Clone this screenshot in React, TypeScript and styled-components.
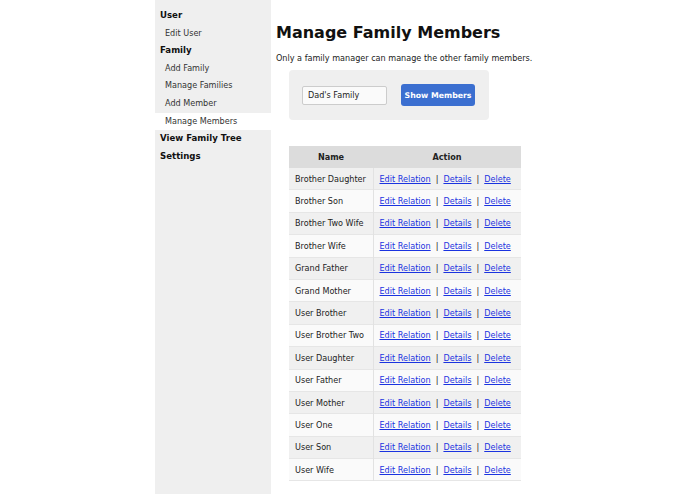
import styled, { createGlobalStyle } from 'styled-components';

const Global = createGlobalStyle`
  html, body { margin: 0; background: #fff; }
  body { font-family: "DejaVu Sans", Verdana, sans-serif; font-size: 8.1px; color: #222; }
`;

const Page = styled.div`
  display: flex;
  min-height: 494px;
  padding-left: 155px;
`;

const Sidebar = styled.nav`
  width: 116px;
  background: #efefef;
  padding-top: 7px;
  display: flex;
  flex-direction: column;
`;

const NavItem = styled.div<{ $head?: boolean; $active?: boolean }>`
  height: 17.6px;
  line-height: 17.6px;
  padding-left: ${(p) => (p.$head ? 5 : 10)}px;
  font-weight: ${(p) => (p.$head ? 700 : 400)};
  font-size: ${(p) => (p.$head ? 8.6 : 8.1)}px;
  background: ${(p) => (p.$active ? '#fff' : 'transparent')};
  color: ${(p) => (p.$head ? '#111' : '#333')};
`;

const Main = styled.main`
  padding-left: 5px;
  flex: 0 0 auto;
`;

const Title = styled.h1`
  margin: 22px 0 0;
  font-size: 16px;
  line-height: 22px;
  font-weight: 700;
  color: #111;
`;

const Intro = styled.p`
  margin: 8px 0 0;
  line-height: 12px;
`;

const FormBox = styled.div`
  margin: 6px 0 0 13px;
  width: 200px;
  height: 50px;
  background: #efefef;
  border-radius: 4px;
  display: flex;
  align-items: center;
  padding-left: 13px;
  box-sizing: border-box;
  gap: 14px;
`;

const Input = styled.div`
  width: 85px;
  height: 19px;
  box-sizing: border-box;
  border: 1px solid #ccc;
  border-radius: 2px;
  background: #fafafa;
  line-height: 17px;
  padding-left: 5px;
`;

const Button = styled.button`
  width: 74px;
  height: 22px;
  border: none;
  border-radius: 3px;
  background: #3b6fd0;
  color: #fff;
  font-family: inherit;
  font-size: 7.8px;
  font-weight: 700;
  padding: 0;
`;

const Table = styled.table`
  margin: 26px 0 0 13px;
  border-collapse: collapse;
  table-layout: fixed;
  width: 232px;
  th { background: #dcdcdc; height: 22px; font-weight: 700; padding: 0; }
  th:first-child { width: 84px; }
  td { height: 21.4px; padding: 0 6px; white-space: nowrap; }
  td:first-child { border-right: 1px solid #e2e2e2; }
  tr:nth-child(odd) td { background: #f0f0f0; }
  tr:nth-child(even) td { background: #fafafa; }
  tbody tr { border-bottom: 1px solid #e6e6e6; }
`;

const Link = styled.a`
  color: #1a33e0;
  text-decoration: underline;
`;

const Sep = styled.span`
  margin: 0 5px;
`;

const members = [
  'Brother Daughter', 'Brother Son', 'Brother Two Wife', 'Brother Wife', 'Grand Father',
  'Grand Mother', 'User Brother', 'User Brother Two', 'User Daughter', 'User Father',
  'User Mother', 'User One', 'User Son', 'User Wife',
];

export default function App() {
  return (
    <Page>
      <Global />
      <Sidebar>
        <NavItem $head>User</NavItem>
        <NavItem>Edit User</NavItem>
        <NavItem $head>Family</NavItem>
        <NavItem>Add Family</NavItem>
        <NavItem>Manage Families</NavItem>
        <NavItem>Add Member</NavItem>
        <NavItem $active>Manage Members</NavItem>
        <NavItem $head>View Family Tree</NavItem>
        <NavItem $head>Settings</NavItem>
      </Sidebar>
      <Main>
        <Title>Manage Family Members</Title>
        <Intro>Only a family manager can manage the other family members.</Intro>
        <FormBox>
          <Input>Dad's Family</Input>
          <Button>Show Members</Button>
        </FormBox>
        <Table>
          <thead>
            <tr><th>Name</th><th>Action</th></tr>
          </thead>
          <tbody>
            {members.map((m) => (
              <tr key={m}>
                <td>{m}</td>
                <td>
                  <Link>Edit Relation</Link><Sep>|</Sep><Link>Details</Link><Sep>|</Sep><Link>Delete</Link>
                </td>
              </tr>
            ))}
          </tbody>
        </Table>
      </Main>
    </Page>
  );
}
